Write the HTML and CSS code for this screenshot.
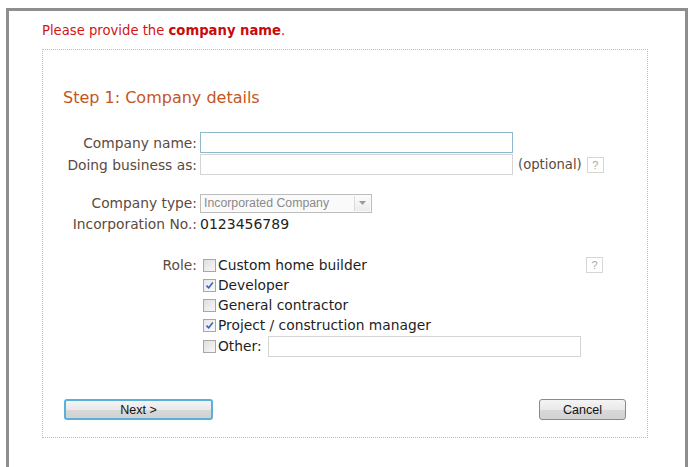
FILE: index.html
```html
<!DOCTYPE html>
<html lang="en">
<head>
<meta charset="utf-8">
<title>Company details</title>
<link rel="stylesheet" href="styles.css">
</head>
<body>
<div class="frame">
  <p class="notice">Please provide the <strong>company name</strong>.</p>
  <div class="panel">
    <h2 class="step">Step 1: Company details</h2>
    <div class="form">
      <label class="lbl">Company name:</label>
      <div class="field"><span class="input focus"></span></div>

      <label class="lbl">Doing business as:</label>
      <div class="field"><span class="input"></span><span class="opt">(optional)</span><span class="help">?</span></div>

      <label class="lbl gap">Company type:</label>
      <div class="field gap">
        <span class="select"><span class="select-text">Incorporated Company</span><span class="select-btn"><svg width="7" height="4" viewBox="0 0 7 4"><path d="M0 0h7L3.5 4z" fill="#9a9a9a"/></svg></span></span>
      </div>

      <label class="lbl">Incorporation No.:</label>
      <div class="field value">0123456789</div>

      <label class="lbl gap2 top">Role:</label>
      <div class="field gap2 roles">
        <ul class="checks">
          <li><span class="cb"></span>Custom home builder</li>
          <li><span class="cb on"><svg width="9" height="9" viewBox="0 0 9 9"><path d="M1.5 4.6l2.2 2.3L7.8 1.6" fill="none" stroke="#3a5fb5" stroke-width="1.6"/></svg></span>Developer</li>
          <li><span class="cb"></span>General contractor</li>
          <li><span class="cb on"><svg width="9" height="9" viewBox="0 0 9 9"><path d="M1.5 4.6l2.2 2.3L7.8 1.6" fill="none" stroke="#3a5fb5" stroke-width="1.6"/></svg></span>Project / construction manager</li>
          <li class="other"><span class="cb"></span>Other:<span class="input wide"></span></li>
        </ul>
        <span class="help">?</span>
      </div>
    </div>
    <div class="actions">
      <button class="btn primary" type="button">Next &gt;</button>
      <button class="btn" type="button">Cancel</button>
    </div>
  </div>
</div>
</body>
</html>
```

FILE: styles.css
```css
html, body {
  margin: 0;
  padding: 0;
  background: #fff;
  overflow: hidden;
}

.frame {
  margin: 8px 0 0 6px;
  width: 682px;
  height: 480px;
  border: 3px solid #8e8e8e;
  border-bottom: none;
  padding: 13px 0 0 33px;
  box-sizing: border-box;
  font-family: "DejaVu Sans", sans-serif;
}

.notice {
  margin: 0;
  height: 14px;
  line-height: 14px;
  font-size: 13.2px;
  color: #d21414;
}
.notice strong { font-weight: bold; color: #c80c0c; }

.panel {
  margin-top: 11px;
  width: 606px;
  height: 389px;
  box-sizing: border-box;
  border: 1px dotted #bdbdbd;
  padding: 38px 0 0 0;
  display: flex;
  flex-direction: column;
}

.step {
  margin: 0 0 24px 20px;
  font-weight: normal;
  font-size: 16px;
  line-height: 20px;
  color: #c4561c;
}

.form {
  display: grid;
  grid-template-columns: 154px 1fr;
  column-gap: 3px;
  row-gap: 1px;
  align-items: center;
}

.lbl {
  text-align: right;
  font-size: 13.8px;
  color: #5b4a3e;
  line-height: 20px;
  white-space: nowrap;
}
.lbl.top { align-self: start; }
.gap { margin-top: 17px; }
.gap2 { margin-top: 20px; }

.field {
  display: flex;
  align-items: center;
  min-height: 20px;
}

.input {
  display: block;
  width: 313px;
  height: 21px;
  box-sizing: border-box;
  border: 1px solid #d4d4d4;
  background: #fff;
}
.input.focus { border-color: #8fb8cc; }

.opt {
  margin-left: 5px;
  font-size: 13.2px;
  color: #5b4a3e;
}

.help {
  display: inline-flex;
  align-items: center;
  justify-content: center;
  width: 17px;
  height: 16px;
  box-sizing: border-box;
  margin-left: 5px;
  border: 1px solid #d6d6d6;
  font-family: "Liberation Sans", sans-serif;
  font-size: 11px;
  color: #a8a8a8;
}

.select {
  display: flex;
  width: 172px;
  height: 19px;
  box-sizing: border-box;
  border: 1px solid #bdbdbd;
  background: #fafafa;
}
.select-text {
  flex: 1;
  padding-left: 3px;
  font-family: "Liberation Sans", sans-serif;
  font-size: 12.3px;
  line-height: 17px;
  color: #8a8a8a;
}
.select-btn {
  width: 15px;
  margin: 1px 1px 1px 0;
  border-left: 1px solid #dcdcdc;
  display: flex;
  align-items: center;
  justify-content: center;
  background: linear-gradient(#fbfbfb, #ececec);
}

.value {
  font-size: 14px;
  color: #222;
  line-height: 20px;
}

.roles { align-items: flex-start; }
.roles .help { margin-top: 2px; margin-left: 5px; }

.checks {
  list-style: none;
  margin: 0;
  padding: 0 0 0 3px;
  width: 378px;
  font-size: 13.8px;
  color: #1e1e1e;
}
.checks li {
  display: flex;
  align-items: center;
  height: 20px;
}
.checks li.other { height: 22px; }

.cb {
  display: inline-flex;
  align-items: center;
  justify-content: center;
  width: 13px;
  height: 13px;
  box-sizing: border-box;
  margin-right: 2px;
  border: 1px solid #a8a8a8;
  background: linear-gradient(135deg, #dedede, #f8f8f8);
}
.cb.on { background: linear-gradient(135deg, #e6e6e6, #fbfbfb); }

.input.wide {
  flex: 1;
  width: auto;
  margin-left: 6px;
}

.actions {
  margin-top: 42px;
  padding: 0 21px 0 21px;
  display: flex;
  justify-content: space-between;
}

.btn {
  height: 21px;
  width: 87px;
  padding: 0;
  border: 1px solid #8a8a8a;
  border-radius: 3px;
  background: linear-gradient(#f4f4f4 0%, #e9e9e9 50%, #d8d8d8 51%, #d2d2d2 100%);
  font-family: "Liberation Sans", sans-serif;
  font-size: 12.5px;
  color: #111;
}
.btn.primary {
  width: 149px;
  border: 2px solid #5ab0d8;
}
```
